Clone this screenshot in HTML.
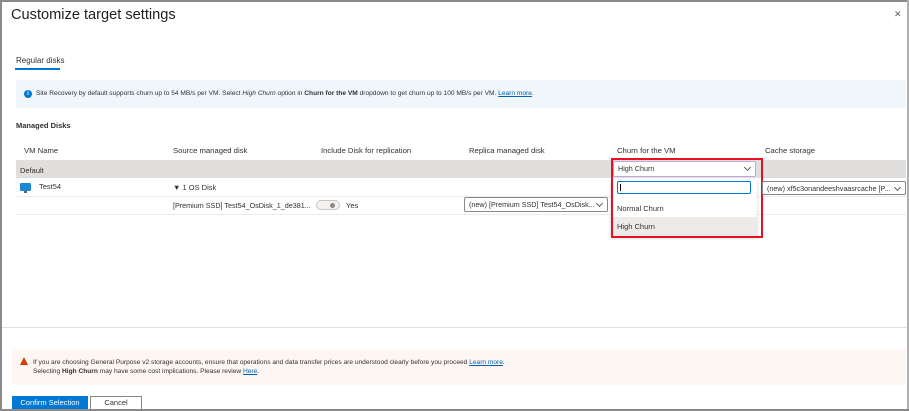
<!DOCTYPE html>
<html><head><meta charset="utf-8"><style>
*{margin:0;padding:0;box-sizing:border-box}
body{width:909px;height:411px;overflow:hidden;background:#fff;font-family:"Liberation Sans",sans-serif;color:#323130;position:relative}
.a{position:absolute;white-space:nowrap}
.s{font-size:7.5px}
.h{font-size:7.7px;color:#323130}
.dd{position:absolute;background:#fff;border:1px solid #8a8886;border-radius:2px;font-size:7.2px;padding:2px 4px;white-space:nowrap;overflow:hidden}
.chev{position:absolute;right:5px;top:3px;width:5px;height:5px;border-right:1px solid #605e5c;border-bottom:1px solid #605e5c;transform:rotate(45deg);background:#fff}
a{color:#0062ad;text-decoration:underline}
</style></head><body>
<div class="a" style="left:0;top:0;width:909px;height:2px;background:#8a8a8a"></div>
<div class="a" style="left:0;top:0;width:2px;height:411px;background:#8a8a8a"></div>
<div class="a" style="left:907px;top:0;width:2px;height:411px;background:#b0b0b0"></div>
<div class="a" style="left:0;top:409px;width:909px;height:2px;background:#8a8a8a"></div>
<div class="a" style="left:11px;top:7px;font-size:14.6px;color:#201f1e">Customize target settings</div>
<div class="a" style="left:171px;top:11px;font-size:7px;color:#605e5c;letter-spacing:-1px">...</div>
<div class="a" style="left:894px;top:9px;font-size:9px;color:#605e5c">✕</div>
<div class="a" style="left:16px;top:56px;font-size:8px">Regular disks</div>
<div class="a" style="left:15px;top:68px;width:45px;height:2px;background:#0078d4"></div>
<div class="a" style="left:16px;top:80px;width:890px;height:28px;background:#eff6fc"></div>
<div class="a" style="left:24px;top:90px;width:8px;height:8px;border-radius:50%;background:#0078d4;color:#fff;font-size:6px;font-weight:bold;text-align:center;line-height:8px">i</div>
<div class="a s" style="left:36px;top:90px;font-size:6.6px">Site Recovery by default supports churn up to 54 MB/s per VM. Select <i>High Churn</i> option in <b>Churn for the VM</b> dropdown to get churn up to 100 MB/s per VM. <a>Learn more</a>.</div>
<div class="a" style="left:16px;top:121px;font-size:7.5px;font-weight:bold">Managed Disks</div>
<div class="a h" style="left:24px;top:146px">VM Name</div>
<div class="a h" style="left:173px;top:146px">Source managed disk</div>
<div class="a h" style="left:321px;top:146px">Include Disk for replication</div>
<div class="a h" style="left:469px;top:146px">Replica managed disk</div>
<div class="a h" style="left:617px;top:146px">Churn for the VM</div>
<div class="a h" style="left:765px;top:146px">Cache storage</div>
<div class="a" style="left:16px;top:160px;width:890px;height:18px;background:#e1dfdd"></div>
<div class="a s" style="left:20px;top:166px">Default</div>
<div class="a" style="left:16px;top:196px;width:890px;height:1px;background:#edebe9"></div>
<div class="a" style="left:16px;top:214px;width:890px;height:1px;background:#edebe9"></div>
<div class="a" style="left:20px;top:183px;width:11px;height:8px;background:#1e88d6;border-radius:1px"></div>
<div class="a" style="left:24px;top:191px;width:3px;height:2px;background:#666"></div>
<div class="a s" style="left:39px;top:182px">Test54</div>
<div class="a s" style="left:173px;top:183px">▼ 1 OS Disk</div>
<div class="a s" style="left:173px;top:201px;font-size:7.2px">[Premium SSD] Test54_OsDisk_1_de381...</div>
<div class="a" style="left:316px;top:200px;width:24px;height:10px;border:1px solid #c8c6c4;border-radius:6px;background:#f3f2f1"></div>
<div class="a" style="left:330px;top:203px;width:5px;height:5px;border-radius:50%;background:#8a8886"></div>
<div class="a s" style="left:346px;top:201px">Yes</div>
<div class="dd" style="left:464px;top:197px;width:144px;height:15px">(new) [Premium SSD] Test54_OsDisk...<span class="chev"></span></div>
<div class="dd" style="left:613px;top:161px;width:143px;height:16px;border-color:#c8a5d8">High Churn<span class="chev"></span></div>
<div class="a" style="left:611px;top:180px;width:146px;height:57px;background:#fff;box-shadow:0 1px 3px rgba(0,0,0,.2)"></div>
<div class="a" style="left:617px;top:181px;width:134px;height:13px;border:1px solid #0078d4;border-radius:2px"></div>
<div class="a" style="left:620px;top:184px;width:1px;height:7px;background:#000"></div>
<div class="a s" style="left:617px;top:204px">Normal Churn</div>
<div class="a" style="left:611px;top:217px;width:146px;height:19px;background:#edebe9"></div>
<div class="a s" style="left:617px;top:222px">High Churn</div>
<div class="a" style="left:611px;top:158px;width:152px;height:80px;border:2px solid #e81123"></div>
<div class="dd" style="left:762px;top:181px;width:144px;height:14px">(new) xf5c3onandeeshvaasrcache [P...<span class="chev"></span></div>
<div class="a" style="left:2px;top:327px;width:905px;height:1px;background:#e1dfdd"></div>
<div class="a" style="left:12px;top:349px;width:894px;height:36px;background:#fdf6f3"></div>
<div class="a" style="left:20px;top:357px;width:0;height:0;border-left:4px solid transparent;border-right:4px solid transparent;border-bottom:8px solid #d83b01"></div>
<div class="a" style="left:33px;top:358px;font-size:6.6px;line-height:9px">If you are choosing General Purpose v2 storage accounts, ensure that operations and data transfer prices are understood clearly before you proceed <a>Learn more</a>.<br>Selecting <b>High Churn</b> may have some cost implications. Please review <a>Here</a>.</div>
<div class="a" style="left:12px;top:396px;width:76px;height:13px;background:#0078d4;color:#fff;font-size:7.5px;text-align:center;line-height:13px">Confirm Selection</div>
<div class="a" style="left:90px;top:396px;width:52px;height:14px;border:1px solid #8a8886;font-size:7.5px;text-align:center;line-height:12px">Cancel</div>
</body></html>
